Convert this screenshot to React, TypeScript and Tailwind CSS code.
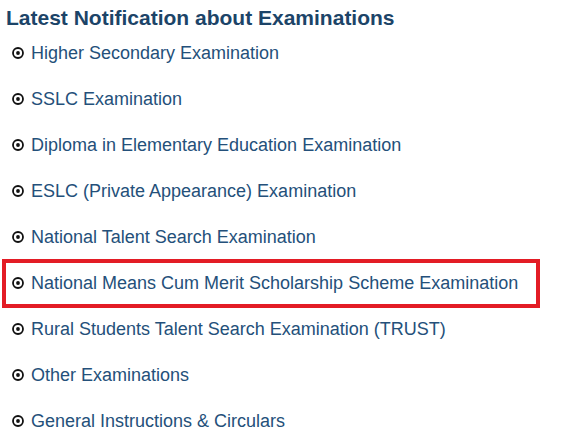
import React from "react";

const items = [
  "Higher Secondary Examination",
  "SSLC Examination",
  "Diploma in Elementary Education Examination",
  "ESLC (Private Appearance) Examination",
  "National Talent Search Examination",
  "National Means Cum Merit Scholarship Scheme Examination",
  "Rural Students Talent Search Examination (TRUST)",
  "Other Examinations",
  "General Instructions & Circulars",
];

function Bullet() {
  return (
    <svg width="12" height="12" viewBox="0 0 12 12" className="shrink-0">
      <circle cx="6" cy="6" r="5" fill="none" stroke="#111" strokeWidth="1.8" />
      <circle cx="6" cy="6" r="1.9" fill="#111" />
    </svg>
  );
}

export default function App() {
  return (
    <div className="w-[580px] h-[441px] bg-white overflow-hidden" style={{ fontFamily: '"Liberation Sans", Arial, sans-serif' }}>
      <h2 className="pl-[6px] pt-[6px] text-[21px] leading-[24px] font-bold text-[#1c4468]">
        Latest Notification about Examinations
      </h2>
      <ul>
        {items.map((t, i) => (
          <li key={i} className="relative h-[46px] flex items-center gap-[7px] pl-[12px] text-[18px] text-[#24507a]">
            <Bullet />
            <span>{t}</span>
            {i === 5 && (
              <div className="absolute left-[2px] top-[-1px] w-[538px] h-[49px] border-[4px] border-[#e31c25] pointer-events-none" />
            )}
          </li>
        ))}
      </ul>
    </div>
  );
}
